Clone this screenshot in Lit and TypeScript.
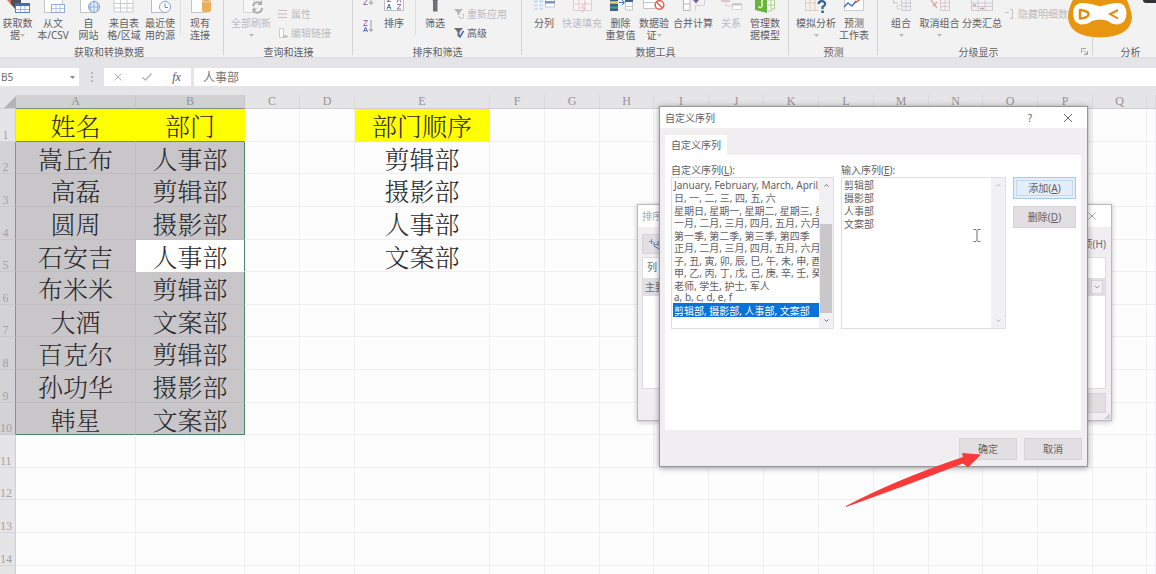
import { LitElement, html, svg, css, nothing } from "lit";
import { customElement, state } from "lit/decorators.js";
import { classMap } from "lit/directives/class-map.js";
import { styleMap } from "lit/directives/style-map.js";

/* ---------- icons: the lower part of each 24px wide ribbon glyph ---------- */
const sheet = (x: number, c = "#c9cbd2") => svg`
  <path d="M${x} -4V12H${x + 19}V-4" fill="#fff" stroke=${c}/>
  <path d="M${x} 3.5H${x + 19}M${x} 8H${x + 19}M${x + 6.5} -4V12M${x + 13} -4V12" stroke=${c} fill="none"/>`;

const glyphs: Record<string, unknown> = {
  getData: svg`<path d="M1 0L6 6V0z" fill="#e2725b"/><path d="M5 -2H15V9H9L5 4z" fill="#4a4f5c"/>
    <rect x="9.500" y="3.500" width="14" height="9" fill="#fff" stroke="#5b83c4"/><rect x="9" y="3" width="15" height="3" fill="#3f6cb5"/>
    <path d="M10 9.500H23M14.500 6V12M19 6V12" stroke="#9db7df"/>`,
  csv: svg`<path d="M3.500 -2V12.500H21.500V-2" fill="#fff" stroke="#c4c4c8"/>
    <rect x="10.500" y="4.500" width="13" height="8" fill="#fff" stroke="#93abd6"/><path d="M11 8.500H23M15 5V12M19 5V12" stroke="#b4c5e3"/>`,
  web: svg`<path d="M3.500 -2V12.500H17V-2" fill="#fff" stroke="#c4c4c8"/>
    <circle cx="17" cy="7" r="5.500" fill="#e8f0fb" stroke="#7e9fd4"/><path d="M17 1.500V12.500M12 7H22M14 3Q12.500 7 14 11M20 3Q21.500 7 20 11" stroke="#8faedd" fill="none"/>`,
  table: sheet(2),
  recent: svg`<path d="M3.500 -2V12.500H18V-2" fill="#fff" stroke="#b9bcc6"/>
    <circle cx="17" cy="7" r="5.500" fill="#fff" stroke="#8aa6d6"/><path d="M17 3.500V7.500H20" stroke="#6d8fca" fill="none"/>`,
  existing: svg`<path d="M3.500 -2V12.500H16V-2" fill="#fff" stroke="#c4c4c8"/>
    <path d="M14 1Q18.500 -2 23 1V11Q18.500 14 14 11z" fill="#e9ae5e"/><path d="M14 1Q18.500 4 23 1" stroke="#f6d5a6" fill="none"/>`,
  refresh: svg`<path d="M4.500 -2V12.500H15V-2" fill="#f7f7f7" stroke="#d6d6d8"/>
    <path d="M14 6A4.500 4.500 0 0 1 22 4M23 8A4.500 4.500 0 0 1 15 11" stroke="#a9a9ad" stroke-width="1.800" fill="none"/><path d="M23 0V5H18zM13.500 13V8.500H18z" fill="#a9a9ad"/>`,
  sort: svg`<path d="M2.500 -2V10.500H21.500V-2" fill="#fff" stroke="#bcbcc6"/>
    <path d="M5 -1.500H9L5 1.500H9M15 2.500L17 -2L19 2.500" stroke="#9a68b4" fill="none"/><path d="M5 9.500L7 4L9 9.500M5.700 7.500H8.300" stroke="#4b74bb" fill="none"/><path d="M15 4.500H19L15 9H19" stroke="#9a68b4" fill="none"/>`,
  filter: svg`<path d="M7 -4H17L14.500 1V11.500H10V1z" fill="#6f7074"/>`,
  split: svg`<rect x="2" y="-2" width="9" height="12" fill="#cfe0f5"/><path d="M2 3.500H11M2 7H11M6.500 -2V10" stroke="#fff"/><rect x="13.500" y="-2" width="9" height="9" fill="#fff" stroke="#c6cad3"/><rect x="13" y="1" width="10" height="2.500" fill="#7f93b5"/>`,
  flash: svg`<path d="M3.500 -2V10.500H21.500V-2M3 4H21M9 -2V10M15 -2V10" fill="#faf2f4" stroke="#e3cdd2"/><path d="M16 2L11 8H15L12 13" stroke="#d8bcc5" fill="none"/>`,
  dedupe: svg`<rect x="1" y="-2" width="8" height="13" fill="#3e6287"/><path d="M1 2.500H9" stroke="#e7cf70" stroke-width="2.500"/><path d="M1 7.500H9" stroke="#4f9a8d" stroke-width="2"/>
    <path d="M10 2.500H15M13 0L15.500 2.500L13 5" stroke="#3e77c7" fill="none"/><rect x="16.500" y="-2" width="7" height="12" fill="#fff" stroke="#c7c9d0"/><rect x="16" y="-1" width="8" height="3" fill="#3e6287"/><path d="M17 6.500H23" stroke="#c7c9d0"/>`,
  validate: svg`<path d="M1.500 -2V8.500H15V-2M1 2.500H15" fill="#fff" stroke="#c3c6ce"/><circle cx="17.500" cy="5" r="4.300" fill="#fff" stroke="#db6152" stroke-width="1.500"/><path d="M14.500 2L20.500 8" stroke="#db6152" stroke-width="1.500"/>`,
  consolidate: svg`<path d="M2.500 -2V10.500H9V-2M2 4H9" fill="#fff" stroke="#b5b7c4"/><path d="M9 -1H15V2" stroke="#7a62a8" fill="none"/><path d="M12 0H18L15 3.500z" fill="#7a62a8"/><path d="M14.500 10.500V5.500H23.500V-2" fill="none" stroke="#d3d4da"/>`,
  relation: svg`<path d="M2 -1H11V2H2z" fill="#dcc7cd"/><path d="M7 2V6H13" stroke="#d3d3d6" fill="none"/><path d="M13.500 3.500H22.500V9.500H13.500z" fill="#fff" stroke="#d5d5d8"/><path d="M13 4.500H23" stroke="#c6c6ca" stroke-width="2"/>`,
  model: svg`<path d="M2 -3L14 -2V13L2 10z" fill="#6cb33e"/><path d="M9 0V6Q7.500 9 5.500 6.500" stroke="#e9f6df" stroke-width="1.500" fill="none"/><path d="M14.500 0H18V11H14.500M18 0H21.500V9H18M15 5H21" fill="#fff" stroke="#a9cf8c"/>`,
  whatif: svg`<path d="M1.500 -2V10.500H15M1 3H12M6 -2V10M11 -2V10" fill="none" stroke="#e5cbb8"/><path d="M14.500 4Q15 1 18 1.200Q21.500 1.500 21 4.500Q20.500 6 18.500 7V9" stroke="#2e6296" stroke-width="2.200" fill="none"/><rect x="17.300" y="10.500" width="2.500" height="2.500" fill="#2e6296"/>`,
  forecast: svg`<path d="M2.500 -2V10.500H21.500V-2" fill="#fff" stroke="#c8cad2"/><path d="M2 7L6 3L10 6L14 1" stroke="#4674b8" stroke-width="1.500" fill="none"/><path d="M13 3L21 -3" stroke="#d8604b" stroke-width="1.500"/>`,
  group: svg`<path d="M4.500 -2V3H9M12.500 -2V10.500H21.500V-2M12 3H21M12 6.500H21M17 -2V10" fill="none" stroke="#c8c8ce"/><path d="M8 5.500H13V9H8z" fill="#f4f4f5" stroke="#d4d4d8"/>`,
  ungroup: svg`<path d="M2.500 -1H7M12.500 -2V10.500H21.500V-2M12 3H21M12 6.500H21M17 -2V10" fill="none" stroke="#dcc6cc"/><path d="M3 0L9 8M9 2L5 6" stroke="#e0a3a3" stroke-width="1.300"/>`,
  subtotal: svg`<path d="M1.500 -2V10.500H22.500V-2M1 3H22M1 6.500H22M8 -2V10M15 -2V10" fill="none" stroke="#cfc9d0"/><path d="M3 -1H6M3 5H6M10 8.500H14" stroke="#d89aa0" stroke-width="1.500"/>`,
};

const icon = (name: string) =>
  html`<svg class="glyph" width="24" height="14" viewBox="0 0 24 14" fill="none" aria-hidden="true">${glyphs[name]}</svg>`;
const caret = html`<svg class="caret" width="5" height="3" viewBox="0 0 5 3" aria-hidden="true"><path d="M0 0H5L2.500 3z" fill="currentColor"/></svg>`;

/* big button: one or two label lines, optional caret */
const big = (name: string, a: string, b = "", drop = false, off = false) => html`
  <button class="big" ?disabled=${off}>
    ${icon(name)}<span>${a}</span>
    ${b || drop ? html`<span class="second">${b}${drop ? caret : nothing}</span>` : nothing}
  </button>`;

const smallGlyphs: Record<string, unknown> = {
  none: nothing,
  props: svg`<path d="M0 1.500H9M0 5H9M0 8.500H9" stroke="#c9b9c2"/>`,
  links: svg`<path d="M1.500 0.500H5.500V9.500H1.500z" fill="#fff" stroke="#ccc"/><path d="M5 8.500H9.500" stroke="#b5b5b8" stroke-width="2"/>`,
  reapply: svg`<path d="M0 0H9L5.500 4V6H3.500V4z" fill="#b5b5b8"/><path d="M5 7A2.500 2.500 0 1 0 9 5" stroke="#b5b5b8" fill="none"/>`,
  advanced: svg`<path d="M0 0H9L5.500 4V9L3.500 8V4z" fill="#6e6f73"/><path d="M4.500 7L6 9L9.500 3" stroke="#3f6fc0" stroke-width="1.500" fill="none"/>`,
  hide: svg`<path d="M0 3.500H4M7.500 0V9.500M5 0.500H8M5 9.500H8" stroke="#c3c3c6" fill="none"/>`,
};
const small = (g: string, text: string, off = true) => html`
  <button class="small" ?disabled=${off}>
    <svg width="10" height="10" viewBox="0 0 10 10" fill="none" aria-hidden="true">${smallGlyphs[g]}</svg>${text}
  </button>`;

const az = (up: boolean) => html`
  <button class="az" aria-label=${up ? "升序" : "降序"}>
    <svg width="11" height="12" viewBox="0 0 11 12" fill="none" aria-hidden="true">
      ${up
        ? svg`<path d="M0.500 5L2.500 0L4.500 5" stroke="#4b74bb"/><path d="M0.500 6.500H4.500L0.500 11.500H4.500" stroke="#9a68b4"/>`
        : svg`<path d="M0.500 0.500H4.500L0.500 5.500H4.500" stroke="#9a68b4"/><path d="M0.500 12L2.500 7L4.500 12M1 10.500H4" stroke="#4b74bb"/>`}
      <path d="M8 0V11M6 9L8 11.500L10 9" stroke="#98999d"/>
    </svg>
  </button>`;

/* ---------- dialog: custom lists ---------- */
@customElement("custom-lists-dialog")
export class CustomListsDialog extends LitElement {
  @state() lists = [
    "January, February, March, April, May",
    "日, 一, 二, 三, 四, 五, 六",
    "星期日, 星期一, 星期二, 星期三, 星期四",
    "一月, 二月, 三月, 四月, 五月, 六月, 七月",
    "第一季, 第二季, 第三季, 第四季",
    "正月, 二月, 三月, 四月, 五月, 六月, 七月",
    "子, 丑, 寅, 卯, 辰, 巳, 午, 未, 申, 酉, 戌",
    "甲, 乙, 丙, 丁, 戊, 己, 庚, 辛, 壬, 癸",
    "老师, 学生, 护士, 军人",
    "a, b, c, d, e, f",
    "剪辑部, 摄影部, 人事部, 文案部",
  ];
  @state() chosen = 10;

  static styles = css`
    :host { display: flex; flex-direction: column; box-sizing: border-box; background: #f0eef1; border: 1px solid #97969a;
      box-shadow: 0 1px 6px rgba(0, 0, 0, 0.4); font: 10px/14px "Noto Sans", "Noto Sans CJK SC", sans-serif; color: #626065; }
    button, select, textarea { font: inherit; color: inherit; margin: 0; box-sizing: border-box; border-radius: 0; }
    u { text-underline-offset: 1px; }
    .title { display: flex; align-items: center; height: 21px; background: #fff; padding: 0 11px 0 5px; }
    .title span { flex: 1; }
    .title button { border: 0; background: none; padding: 0; width: 16px; height: 16px; margin-left: 22px; display: grid; place-items: center; font-size: 10px; }
    .tabs { padding: 7px 5px 0; display: flex; }
    .tab { border: 0; background: #fff; padding: 0 6px; height: 20px; }
    .panel { background: #fefefe; margin: 0 6px 0 5px; padding: 8px 5px 0 6px; height: 275px; box-sizing: border-box;
      display: grid; grid-template-columns: 163px 165px 63px; column-gap: 7px; align-content: start; }
    label { height: 14px; }
    .box { display: flex; border: 1px solid #e0dee2; background: #fff; height: 152px; box-sizing: border-box; }
    select { flex: 1; min-width: 0; border: 0; padding: 0 0 0 1px; outline: 0; overflow: hidden; scrollbar-width: none; background: #fff; }
    option { box-sizing: border-box; padding: 0 0 0 1px; height: 12px; min-height: 0; line-height: 14px; white-space: nowrap; overflow: visible; }
    option:nth-child(even) { height: 13px; }
    option:checked { color: #fff; background: #0b72d8 linear-gradient(#0b72d8, #0b72d8); height: 14px; }
    textarea { flex: 1; min-width: 0; border: 0; outline: 0; resize: none; padding: 1px 0 0 2px; line-height: 13px; background: #fff; overflow: hidden; }
    .bar { width: 14px; background: #f1f0f2; display: flex; flex-direction: column; align-items: center; justify-content: space-between; padding: 6px 0; box-sizing: border-box; color: #6b6a6e; }
    .bar.idle { color: #b9b8bc; }
    .thumb { width: 12px; height: 89px; margin: auto 0 6px; background: #c9c7ca; }
    .side { display: flex; flex-direction: column; gap: 7px; }
    .side button, .foot button { height: 22px; border: 1px solid #d6d4d8; background: #e1dfe2; padding: 0; }
    .side .primary { background: #e4eefa; border: 1px solid #a9c9ea; box-shadow: inset 0 0 0 2px #e4eefa, inset 0 0 0 3px #c3d9f0; }
    .foot { display: flex; justify-content: flex-end; gap: 7px; padding: 8px 5px 6px 0; }
    .foot button { width: 58px; }
  `;

  private arrow(d: string) {
    return html`<svg width="5" height="3" viewBox="0 0 5 3" fill="none" aria-hidden="true"><path d=${d} stroke="currentColor"/></svg>`;
  }

  render() {
    return html`
      <div class="title"><span>自定义序列</span>
        <button>?</button>
        <button aria-label="关闭"><svg width="8" height="8" viewBox="0 0 8 8"><path d="M0 0L8 8M8 0L0 8" stroke="#666"/></svg></button>
      </div>
      <div class="tabs"><button class="tab">自定义序列</button></div>
      <div class="panel">
        <label for="lists">自定义序列(<u>L</u>):</label><label for="entries">输入序列(<u>E</u>):</label><span></span>
        <div class="box">
          <select id="lists" size="11" @change=${(e: Event) => (this.chosen = (e.target as HTMLSelectElement).selectedIndex)}>
            ${this.lists.map((t, i) => html`<option ?selected=${i === this.chosen}>${t}</option>`)}
          </select>
          <div class="bar">${this.arrow("M0.500 2.500L2.500 0.500L4.500 2.500")}<div class="thumb"></div>${this.arrow("M0.500 0.500L2.500 2.500L4.500 0.500")}</div>
        </div>
        <div class="box">
          <textarea id="entries" .value=${this.lists[this.chosen].split(", ").join("\n")}></textarea>
          <div class="bar idle">${this.arrow("M0.500 2.500L2.500 0.500L4.500 2.500")}${this.arrow("M0.500 0.500L2.500 2.500L4.500 0.500")}</div>
        </div>
        <div class="side"><button class="primary">添加(<u>A</u>)</button><button>删除(<u>D</u>)</button></div>
      </div>
      <div class="foot"><button>确定</button><button>取消</button></div>`;
  }
}

/* ---------- dialog: sort (behind) ---------- */
@customElement("sort-dialog")
export class SortDialog extends LitElement {
  static styles = css`
    :host { display: flex; flex-direction: column; box-sizing: border-box; background: #f0eef1; border: 1px solid #bbb9bd;
      box-shadow: 0 1px 5px rgba(0, 0, 0, 0.25); font: 10px/14px "Noto Sans", "Noto Sans CJK SC", sans-serif; color: #6b696e; }
    button { font: inherit; color: inherit; border: 1px solid #d6d4d8; background: #e1dfe2; padding: 0; height: 20px; box-sizing: border-box; }
    .title { display: flex; align-items: center; justify-content: space-between; height: 22px; background: #fff; padding: 0 15px 0 4px; color: #a9a7ab; }
    .title button { border: 0; background: none; width: 8px; height: 8px; display: grid; }
    .tools { display: flex; justify-content: space-between; padding: 7px 5px 3px 4px; }
    .tools button { width: 70px; }
    .tools button:first-child { display: flex; align-items: center; padding-left: 6px; }
    .tools button:last-child { border: 0; background: none; text-align: right; }
    .list { flex: 1; margin: 0 5px 0 4px; background: #fff; border: 1px solid #dddbdf; }
    .head { height: 20px; padding: 2px 4px; box-sizing: border-box; }
    .line { height: 18px; background: #e1dfe3; padding: 0 2px; display: flex; align-items: center; justify-content: space-between; }
    .line button { width: 12px; height: 14px; display: grid; place-items: center; background: #f0eef1; }
    .foot { display: flex; justify-content: flex-end; padding: 4px 5px 7px; }
    .foot button { width: 58px; }
    .grip { position: absolute; right: 1px; bottom: 1px; }
  `;
  render() {
    return html`
      <div class="title"><span>排序</span><button aria-label="关闭"><svg width="8" height="8" viewBox="0 0 8 8"><path d="M0.500 0.500L7.500 7.500M7.500 0.500L0.500 7.500" stroke="#abaaad"/></svg></button></div>
      <div class="tools">
        <button aria-label="添加条件"><svg width="11" height="11" viewBox="0 0 11 11" fill="none"><path d="M0 2.500H4M2.500 0V5" stroke="#6f8fc4"/><path d="M5 3V7L10 10M9 2V7" stroke="#4b74bb"/><path d="M6 5.500H9" stroke="#9a7bb4"/></svg></button>
        <button>选项(H)</button>
      </div>
      <div class="list">
        <div class="head">列</div>
        <div class="line"><span>主要关键字</span><button aria-label="次序"><svg width="6" height="4" viewBox="0 0 6 4" fill="none"><path d="M0.500 0.500L3 3L5.500 0.500" stroke="#a3a1a5"/></svg></button></div>
      </div>
      <div class="foot"><button aria-label="取消"></button></div>
      <svg class="grip" width="6" height="6" viewBox="0 0 6 6" aria-hidden="true"><path d="M6 0V6H0z" fill="#cfcdd1"/></svg>`;
  }
}

/* ---------- workbook ---------- */
const SELECTED_ROWS = [2, 10];

@customElement("app-root")
export class AppRoot extends LitElement {
  private cols: [string, number][] = [
    ["A", 120], ["B", 109], ["C", 55], ["D", 55], ["E", 135], ["F", 55], ["G", 55], ["H", 54], ["I", 55], ["J", 55],
    ["K", 55], ["L", 55], ["M", 55], ["N", 54], ["O", 55], ["P", 55], ["Q", 54], ["R", 55],
  ];
  private cells: Record<string, string[]> = {
    A: ["姓名", "嵩丘布", "高磊", "圆周", "石安吉", "布米米", "大酒", "百克尔", "孙功华", "韩星"],
    B: ["部门", "人事部", "剪辑部", "摄影部", "人事部", "剪辑部", "文案部", "剪辑部", "摄影部", "文案部"],
    E: ["部门顺序", "剪辑部", "摄影部", "人事部", "文案部"],
  };
  @state() active = "B5";

  static styles = css`
    :host { display: block; position: relative; height: 100vh; overflow: hidden; background: #fdfdfd;
      font: 10px/12px "Noto Sans", "Noto Sans CJK SC", sans-serif; color: #5f5e61; }
    button, input { font: inherit; color: inherit; border: 0; background: none; padding: 0; margin: 0; border-radius: 0; }

    .ribbon { display: flex; height: 58px; background: #f3f2f3; border-bottom: 1px solid #dddcde; box-sizing: border-box; overflow: hidden; }
    .group { box-sizing: border-box; flex: none; display: flex; flex-direction: column; position: relative; height: 58px; }
    .group::after { content: ""; position: absolute; right: 0; top: 0; height: 55px; border-right: 1px solid #d3d2d4; }
    .group h2 { margin: 2px 0 0; font: inherit; text-align: center; }
    .tools { display: grid; height: 44px; align-items: start; }
    .data { width: 224px; } .data .tools { grid-template-columns: 35px 36px 35px 36px 36px 3px 38px; }
    .data h2 { padding-right: 6px; }
    .query { width: 129px; } .query .tools { grid-template-columns: 54px 1fr; }
    .sort { width: 169px; } .sort .tools { grid-template-columns: 30px 22px 11px 38px 1fr; }
    .kit { width: 267px; } .kit .tools { padding-left: 3px; grid-template-columns: 38px 38px 39px 28px 50px 26px 42px; }
    .guess { width: 89px; } .guess .tools { padding-left: 5px; grid-template-columns: 44px 32px; }
    .outline { width: 215px; } .outline .tools { padding-left: 4px; grid-template-columns: 38px 39px 46px 1fr; }
    .outline h2 { padding-right: 14px; }
    .study { flex: 1; } .study h2 { padding: 44px 0 0 12px; } .study::after { display: none; }
    .big { display: flex; flex-direction: column; align-items: center; white-space: nowrap; }
    .big > span { line-height: 12px; height: 12px; }
    .glyph { display: block; margin-bottom: 3px; overflow: hidden; flex: none; }
    .second { display: flex; align-items: center; }
    .caret { margin-left: 4px; color: #b9b8bb; flex: none; }
    .second > .caret:only-child { margin-left: 0; }
    .namebox .caret { color: #88878a; }
    button:disabled { color: #bcbbbe; }
    .rule { height: 35px; border-right: 1px solid #dddcde; }
    .stack { display: flex; flex-direction: column; gap: 7px; padding-top: 8px; align-items: flex-start; margin-top: -19px; }
    .small { display: flex; align-items: center; gap: 3px; height: 12px; white-space: nowrap; }
    .small svg { flex: none; }
    .az { display: block; height: 12px; margin: 0 auto 15px; }
    .azs { margin-top: -7px; }
    .launch { position: absolute; right: 5px; bottom: 3px; height: 7px; display: grid; }

    .formula { display: flex; align-items: stretch; height: 18px; padding: 10px 0 9px; background: #e5e4e6; }
    .namebox { display: flex; align-items: center; width: 79px; background: #fff; padding: 0 4px 0 1px; box-sizing: border-box; color: #6b6a6d; }
    .namebox input { flex: 1; min-width: 0; }
    .dots { width: 25px; display: grid; place-items: center; }
    .acts { width: 87px; background: #fff; display: flex; align-items: center; justify-content: space-around; }
    .acts .fx { font: italic 12px/14px "Liberation Serif", serif; color: #565558; }
    .entry { flex: 1; min-width: 0; margin-left: 3px; background: #fff; padding: 0 9px; font-size: 12px; color: #77767a; }
    .acts button { display: grid; place-items: center; height: 16px; }
    .entry, .namebox input { outline: 0; }

    table { table-layout: fixed; width: 100%; border-collapse: separate; border-spacing: 0; }
    th, td { padding: 0; box-sizing: border-box; font-weight: 400; overflow: hidden; white-space: nowrap; text-align: center; }
    .gutter { width: 16px; }
    thead th { height: 14px; background: #e5e4e6; border-right: 1px solid #d9d8da; border-bottom: 1px solid #cfced0; font: 12px/13px "Liberation Serif", serif; color: #949396; }
    thead th.on { background: #d1d0d2; border-right-color: #c6c5c7; border-bottom-color: #7f8f7c; }
    thead .corner { border-right: 0; }
    .corner svg { display: block; margin-left: auto; }
    tbody th { background: #e5e4e6; border-right: 1px solid #cfced0; border-bottom: 1px solid #d6d5d7; vertical-align: bottom; font: 12px/12px "Liberation Serif", serif; color: #a3a2a5; text-align: center; padding-right: 4px; text-overflow: clip; }
    tbody th.on { background: #d3d2d4; border-right-color: #7d9a88; border-bottom-color: #c8c7c9; }
    td { border-right: 1px solid #efeef0; border-bottom: 1px solid #efeef0; font: 300 25px/30px "Noto Serif CJK SC", "Noto Sans CJK SC Light", "Noto Sans CJK SC", serif; color: #2b2a2c; }
    td.head { background: #ffff00; border-color: #ffff00; }
    td.picked { background: #c8c6c9; border-color: #bfbdc0; }
    td.picked.active { background: #fff; border-bottom-color: #fff; }
    td.edge-top { border-bottom-color: #7d8a3c; }
    td.picked.edge-right { border-right-color: #4d8568; }
    td.picked.edge-bottom { border-bottom-color: #4d8568; }

    .sorting { position: absolute; left: 637px; top: 204px; width: 475px; height: 217px; }
    .listing { position: absolute; left: 659px; top: 106px; width: 429px; }
    .mascot { position: absolute; left: 1068px; top: 0; }
    .notch { position: absolute; right: 0; top: 0; width: 13px; height: 3px; background: #333235; border-radius: 0 0 0 3px; }
    .pointer { position: absolute; left: 973px; top: 229px; }
    .arrow { position: absolute; left: 845px; top: 452px; }
  `;

  private renderRibbon() {
    return html`
      <header class="ribbon">
        <section class="group data"><div class="tools">
          ${big("getData", "获取数", "据", true)}${big("csv", "从文", "本/CSV")}${big("web", "自", "网站")}${big("table", "来自表", "格/区域")}${big("recent", "最近使", "用的源")}
          <div class="rule"></div>${big("existing", "现有", "连接")}
        </div><h2>获取和转换数据</h2></section>
        <section class="group query"><div class="tools">
          ${big("refresh", "全部刷新", "", true, true)}
          <div class="stack">${small("none", "查询和连接")}${small("props", "属性")}${small("links", "编辑链接")}</div>
        </div><h2>查询和连接</h2></section>
        <section class="group sort"><div class="tools">
          <div class="azs">${az(true)}${az(false)}</div>${big("sort", "排序")}<div class="rule"></div>${big("filter", "筛选")}
          <div class="stack">${small("none", "清除")}${small("reapply", "重新应用")}${small("advanced", "高级", false)}</div>
        </div><h2>排序和筛选</h2></section>
        <section class="group kit"><div class="tools">
          ${big("split", "分列")}${big("flash", "快速填充", "", false, true)}${big("dedupe", "删除", "重复值")}${big("validate", "数据验", "证", true)}
          ${big("consolidate", "合并计算")}${big("relation", "关系", "", false, true)}${big("model", "管理数", "据模型")}
        </div><h2>数据工具</h2></section>
        <section class="group guess"><div class="tools">${big("whatif", "模拟分析", "", true)}${big("forecast", "预测", "工作表")}</div><h2>预测</h2></section>
        <section class="group outline"><div class="tools">
          ${big("group", "组合", "", true)}${big("ungroup", "取消组合", "", true)}${big("subtotal", "分类汇总")}
          <div class="stack">${small("none", "显示明细数据")}${small("hide", "隐藏明细数据")}</div>
        </div><h2>分级显示</h2>
          <button class="launch" aria-label="设置"><svg width="7" height="7" viewBox="0 0 7 7" fill="none"><path d="M0.500 5V0.500H5M2.500 2.500L6 6M6.500 3V6.500H3" stroke="#a3a2a5"/></svg></button>
        </section>
        <section class="group study"><h2>分析</h2></section>
      </header>`;
  }

  private renderFormula() {
    return html`
      <div class="formula">
        <div class="namebox"><input aria-label="名称框" .value=${this.active} />${caret}</div>
        <div class="dots"><svg width="2" height="10" viewBox="0 0 2 10"><path d="M0 0H2V2H0zM0 4H2V6H0zM0 8H2V10H0z" fill="#bbbabd"/></svg></div>
        <div class="acts">
          <button aria-label="取消"><svg width="8" height="8" viewBox="0 0 8 8"><path d="M0.500 0.500L7.500 7.500M7.500 0.500L0.500 7.500" stroke="#b3b2b5"/></svg></button>
          <button aria-label="输入"><svg width="10" height="8" viewBox="0 0 10 8" fill="none"><path d="M0.500 4.500L3.500 7L9.500 0.500" stroke="#b3b2b5" stroke-width="1.300"/></svg></button>
          <button class="fx">fx</button>
        </div>
        <input class="entry" aria-label="编辑栏" value="人事部" />
      </div>`;
  }

  private renderCell(col: string, row: number) {
    const text = this.cells[col]?.[row - 1] ?? "";
    const [first, last] = SELECTED_ROWS;
    const inCols = col === "A" || col === "B";
    const picked = inCols && row >= first && row <= last;
    return html`<td class=${classMap({
      head: row === 1 && text !== "",
      picked,
      active: col + row === this.active,
      "edge-top": inCols && row === first - 1,
      "edge-right": picked && col === "B",
      "edge-bottom": inCols && row === last,
    })}>${text}</td>`;
  }

  private renderGrid() {
    const rows = [33, 32, 33, 33, 32, 33, 32, 33, 33, 32, 33, 32, 33, 33, 32];
    return html`
      <table>
        <colgroup><col class="gutter" />${this.cols.map(([n, w]) => html`<col style=${styleMap({ width: n === "R" ? "auto" : `${w}px` })} />`)}</colgroup>
        <thead><tr>
          <th class="corner"><svg width="12" height="12" viewBox="0 0 12 12" aria-hidden="true"><path d="M12 0V12H0z" fill="#b3b2b5"/></svg></th>
          ${this.cols.map(([n]) => html`<th scope="col" class=${classMap({ on: n === "A" || n === "B" })}>${n === "R" ? "" : n}</th>`)}
        </tr></thead>
        <tbody>${rows.map((h, i) => html`
          <tr style=${styleMap({ height: `${h}px` })}>
            <th scope="row" class=${classMap({ on: i + 1 >= SELECTED_ROWS[0] && i + 1 <= SELECTED_ROWS[1] })}>${i + 1}</th>
            ${this.cols.map(([n]) => this.renderCell(n, i + 1))}
          </tr>`)}
        </tbody>
      </table>`;
  }

  render() {
    return html`
      ${this.renderRibbon()}${this.renderFormula()}${this.renderGrid()}
      <svg class="mascot" width="64" height="38" viewBox="0 0 64 38" fill="none" aria-hidden="true">
        <path d="M7 -4Q0 8 0 17Q1 37 32 37.500Q63 37 64 17Q63 8 57 -4z" fill="#e8960f"/>
        <path d="M13 3Q23 3 32 6.500Q41 3 51 3Q58 4 58.500 13Q58.500 23 50 24.500Q44 24.500 40 21Q32 18 24 21Q20 24.500 13 24.500Q5 23 5 13Q5.500 4 13 3z" fill="#fff"/>
        <path d="M12 10Q21 11 20.500 14.500Q19.500 18 12 18.500z" stroke="#e08a12" stroke-width="2.500" stroke-linejoin="round"/>
        <path d="M50 10L42 14L50 18.500" stroke="#e08a12" stroke-width="2"/>
      </svg>
      <div class="notch"></div>
      <sort-dialog class="sorting"></sort-dialog>
      <custom-lists-dialog class="listing"></custom-lists-dialog>
      <svg class="pointer" width="8" height="13" viewBox="0 0 8 13" fill="none" aria-hidden="true"><path d="M0.500 0.500H3L4 1.500L5 0.500H7.500M4 1.500V11.500M0.500 12.500H3L4 11.500L5 12.500H7.500" stroke="#6f6e72"/></svg>
      <svg class="arrow" width="137" height="56" viewBox="0 0 137 56" aria-hidden="true"><path d="M1 54Q50 28 118 5L117 1L136 2.500L123 15.500L118 11.500Q60 34 1 55z" fill="#fa3a38"/></svg>`;
  }
}
